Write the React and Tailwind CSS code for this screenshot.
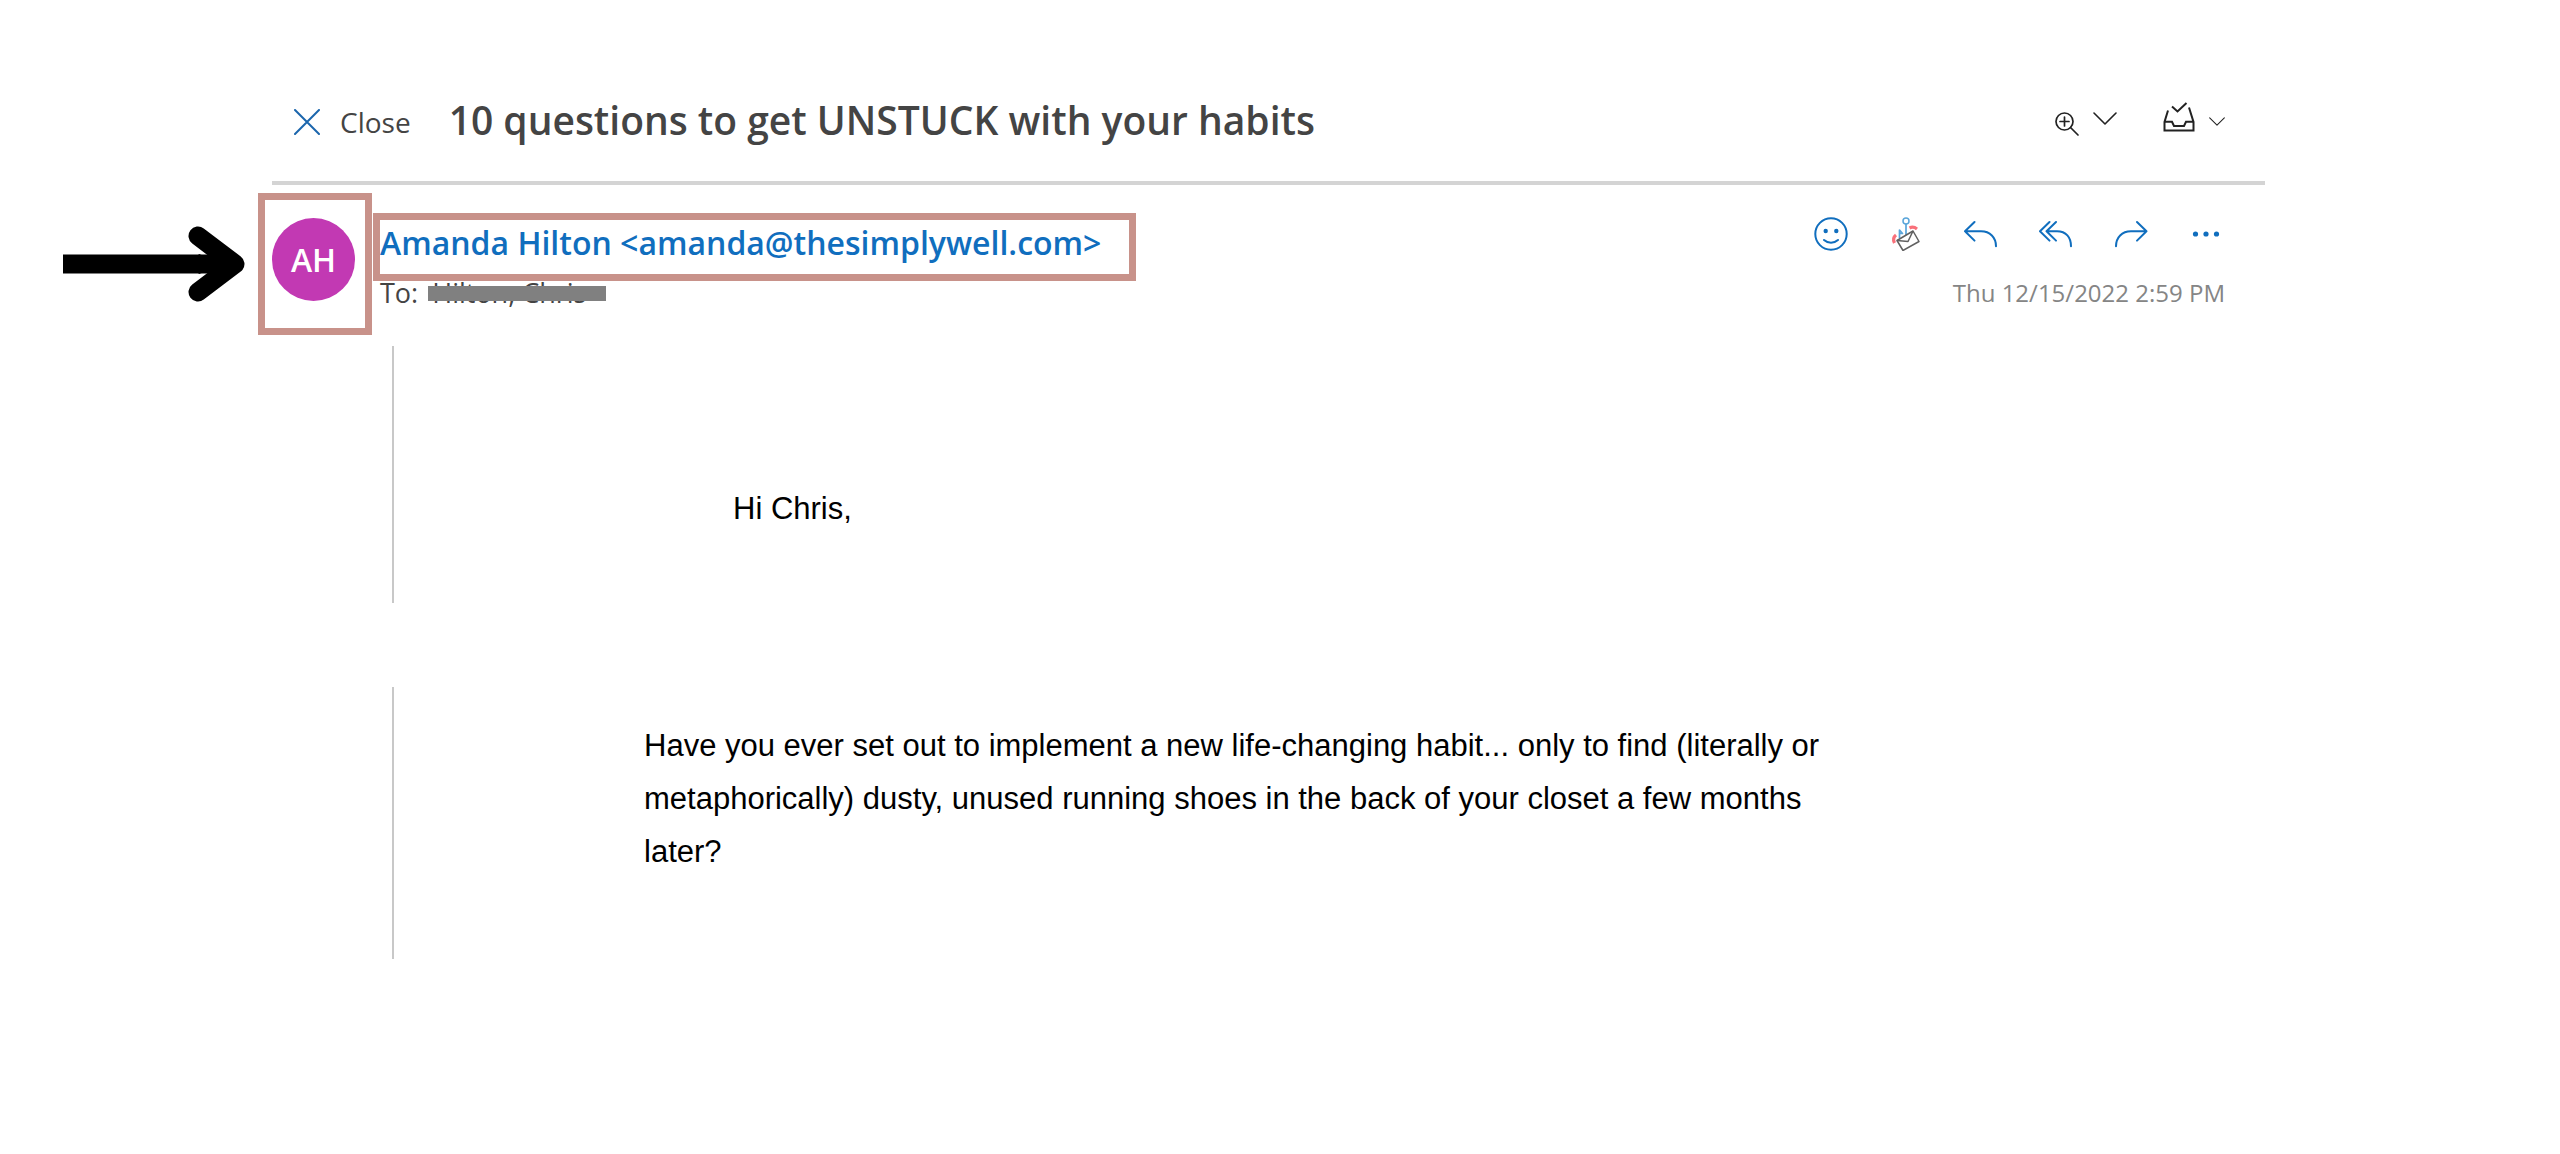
import React from 'react';

const stroke = {
  fill: 'none',
  stroke: 'currentColor',
  strokeLinecap: 'round',
  strokeLinejoin: 'round',
};

function CloseIcon() {
  return (
    <svg className="w-[26px] h-[26px] text-[#1b66ad]" viewBox="0 0 26 26" strokeWidth="2" {...stroke}>
      <path d="M1 1l24 24M25 1L1 25" />
    </svg>
  );
}

function ZoomIcon() {
  return (
    <svg className="w-6 h-6" viewBox="0 0 24 24" strokeWidth="1.7" {...stroke}>
      <circle cx="9.5" cy="9.5" r="8.5" />
      <path d="M15.5 15.5l7.5 7.5M9.5 5v9M5 9.5h9" />
    </svg>
  );
}

function ChevronIcon({ className }) {
  return (
    <svg className={className} viewBox="0 0 24 13" strokeWidth="1.6" {...stroke}>
      <path d="M1 1l11 11L23 1" />
    </svg>
  );
}

function TrayIcon() {
  return (
    <svg className="w-8 h-[30px]" viewBox="0 0 32 30" fill="none" stroke="currentColor" strokeWidth="2">
      <path d="M5 8.500L1.500 20v8.500h29V20L26 5.500M1.500 19.800h7.500l2 4.200h10l2-4.200h7.500" />
      <path d="M9 4.500l5.500 5L23.500 1" />
    </svg>
  );
}

function SmileIcon() {
  return (
    <svg className="w-[34px] h-[34px]" viewBox="0 0 34 34" strokeWidth="2" {...stroke}>
      <circle cx="17" cy="17" r="15.700" />
      <circle cx="11.700" cy="14" r="1.200" fill="currentColor" />
      <circle cx="22.300" cy="14" r="1.200" fill="currentColor" />
      <path d="M10 23c4 3.600 10 3.600 14 0" />
    </svg>
  );
}

// Hooked envelope of the phishing report add-in
function PhishIcon() {
  return (
    <svg className="w-[34px] h-[34px]" viewBox="0 0 34 34" fill="none" strokeLinejoin="round">
      <circle cx="17" cy="4" r="3" stroke="#5aa5da" strokeWidth="1.500" />
      <path d="M17 7v12M10.500 21v-8l3 3.500h-3" stroke="#5aa5da" strokeWidth="1.700" />
      <path d="M20.500 11c2.500-1.300 5-1 7.500 1M7 18c-2.500 2-3 5-1.500 8" stroke="#f9707a" strokeWidth="3.200" />
      <path d="M8 23.500l16-9.500L30 24.500l-16 9z" fill="#fff" stroke="#606060" strokeWidth="1.500" />
      <path d="M8 23.500l11 1L24 14" stroke="#606060" strokeWidth="1.500" />
    </svg>
  );
}

function ReplyIcon() {
  return (
    <svg className="w-[34px] h-[34px]" viewBox="0 0 34 34" strokeWidth="2" {...stroke}>
      <path d="M10.500 5L1 14.300l9.500 9.300M1 14.300h16c9 0 15 6 15 15" />
    </svg>
  );
}

function ReplyAllIcon() {
  return (
    <svg className="w-[34px] h-[34px]" viewBox="0 0 34 34" strokeWidth="2" {...stroke}>
      <path d="M10.500 5L1 14.300l9.500 9.300M17 5l-9.500 9.300L17 23.600M7.500 14.300H18c9 0 14 6 14 15" />
    </svg>
  );
}

function ForwardIcon() {
  return (
    <svg className="w-[34px] h-[34px]" viewBox="0 0 34 34" strokeWidth="2" {...stroke}>
      <path d="M23 5l9.500 9.300-9.500 9.300M32.500 14.300H17c-9 0-15 6-15 15" />
    </svg>
  );
}

function MoreIcon() {
  return (
    <svg className="w-[34px] h-[34px]" viewBox="0 0 34 34" fill="currentColor">
      <circle cx="6.500" cy="17" r="2.600" />
      <circle cx="17" cy="17" r="2.600" />
      <circle cx="27.500" cy="17" r="2.600" />
    </svg>
  );
}

function ArrowPointer() {
  return (
    <svg className="absolute right-full top-[26px] mr-5 w-[182px] h-[76px]" viewBox="0 0 182 76" aria-hidden="true">
      <path d="M0 38h166" stroke="#000" strokeWidth="19" />
      <path d="M135 10l37 28-37 28" fill="none" stroke="#000" strokeWidth="19" strokeLinecap="round" strokeLinejoin="round" />
      <path d="M128 38l8-10 26 10-26 10z" />
    </svg>
  );
}

const actions = [
  { name: 'React', icon: SmileIcon },
  { name: 'Report phishing', icon: PhishIcon },
  { name: 'Reply', icon: ReplyIcon },
  { name: 'Reply all', icon: ReplyAllIcon },
  { name: 'Forward', icon: ForwardIcon },
  { name: 'More actions', icon: MoreIcon },
];

export default function App() {
  return (
    <div className="min-h-screen bg-white pl-[272px] pr-[295px] pt-20 font-['Open_Sans','Noto_Sans',sans-serif] text-[#444]">
      {/* Toolbar */}
      <header className="flex items-start justify-between h-[105px] pl-[22px] pr-10 border-b-4 border-[#d4d4d4]">
        <div className="flex items-baseline pt-3.5">
          <button className="flex items-center gap-5 text-[28px] leading-10">
            <CloseIcon />
            Close
          </button>
          <h1 className="ml-[38px] text-[39px] leading-[52px] font-semibold">
            10 questions to get UNSTUCK with your habits
          </h1>
        </div>
        <div className="flex items-center gap-[46px] pt-[22px] text-[#222]">
          <button aria-label="Zoom" className="flex items-start gap-3.5 pt-2.5">
            <ZoomIcon />
            <ChevronIcon className="w-6 h-[13px]" />
          </button>
          <button aria-label="Move message" className="flex items-end gap-3.5 pb-1">
            <TrayIcon />
            <ChevronIcon className="w-4 h-[9px] mb-1.5" />
          </button>
        </div>
      </header>

      <main>
        {/* Message header */}
        <section className="flex items-start justify-between pr-10 h-[161px] pt-7">
          <div className="flex gap-[25px]">
            <div className="relative">
              <div className="w-[83px] h-[83px] mt-[5px] rounded-full bg-[#c239b3] text-white text-[32px] font-semibold flex items-center justify-center">
                AH
              </div>
              <div className="absolute -left-3.5 -right-[17px] -top-5 h-[142px] border-[7px] border-[#c8928a]">
                <ArrowPointer />
              </div>
            </div>
            <div>
              <div className="relative">
                <a href="mailto:amanda@thesimplywell.com" className="block text-[32px] leading-[60px] font-semibold text-[#106ebe]">
                  Amanda Hilton &lt;amanda@thesimplywell.com&gt;
                </a>
                <div className="absolute -left-[7px] -right-[35px] top-0 h-[68px] border-[7px] border-[#c8928a] pointer-events-none"></div>
              </div>
              <p className="text-[27px] leading-10">
                To:
                <span className="relative inline-block ml-2.5 px-1">
                  Hilton, Chris
                  <span className="absolute left-0 -right-4 top-[13px] h-[15px] bg-[#808080]"></span>
                </span>
              </p>
            </div>
          </div>
          <div className="flex flex-col items-end pt-1">
            <div className="flex gap-[41px] mr-0.5 text-[#106ebe]">
              {actions.map((item) => {
                const Icon = item.icon;
                return (
                  <button key={item.name} aria-label={item.name}>
                    <Icon />
                  </button>
                );
              })}
            </div>
            <time className="mt-6 text-[24px] leading-9 text-[#858585]">Thu 12/15/2022 2:59 PM</time>
          </div>
        </section>

        {/* Message body */}
        <article className="ml-[120px] flex flex-col gap-[84px] font-['Liberation_Sans',Arial,sans-serif] text-[31px] leading-[53px] text-black">
          <div className="h-[257px] border-l-2 border-[#c8c8c8] pl-[339px] pt-[136px]">
            <p>Hi Chris,</p>
          </div>
          <div className="h-[272px] border-l-2 border-[#c8c8c8] pl-[250px] pt-8">
            <p className="max-w-[1220px]">
              Have you ever set out to implement a new life-changing habit... only to find (literally or
              metaphorically) dusty, unused running shoes in the back of your closet a few months later?
            </p>
          </div>
        </article>
      </main>
    </div>
  );
}
